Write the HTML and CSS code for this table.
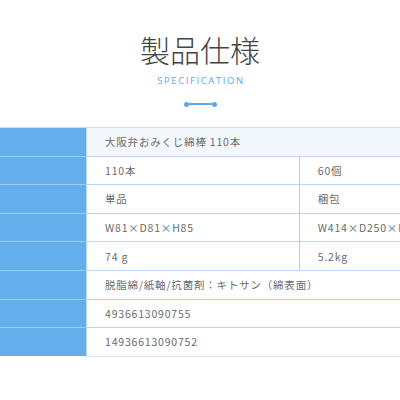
FILE: index.html
```html
<!DOCTYPE html>
<html lang="ja">
<head>
<meta charset="utf-8">
<link rel="stylesheet" href="styles.css">
</head>
<body>
<section class="spec">
  <header class="spec-head">
    <h1 class="spec-title">製品仕様</h1>
    <p class="spec-sub">SPECIFICATION</p>
    <div class="spec-deco"><span class="dot"></span><span class="bar"></span><span class="dot"></span></div>
  </header>
  <div class="table-wrap">
    <table class="spec-table">
      <tr class="first"><th></th><td colspan="2">大阪弁おみくじ綿棒 110本</td></tr>
      <tr><th></th><td class="mid">110本</td><td>60個</td></tr>
      <tr><th></th><td class="mid">単品</td><td>梱包</td></tr>
      <tr><th></th><td class="mid">W81×D81×H85</td><td>W414×D250×H200</td></tr>
      <tr><th></th><td class="mid">74 g</td><td>5.2kg</td></tr>
      <tr><th></th><td colspan="2">脱脂綿/紙軸/抗菌剤：キトサン（綿表面）</td></tr>
      <tr><th></th><td colspan="2">4936613090755</td></tr>
      <tr class="last"><th></th><td colspan="2">14936613090752</td></tr>
    </table>
  </div>
</section>
</body>
</html>
```
FILE: styles.css
```css
html, body {
  margin: 0;
  padding: 0;
  background: #fff;
  overflow: hidden;
}
body {
  font-family: "Noto Sans CJK JP", "Noto Sans", sans-serif;
  color: #666;
}
.spec-head {
  text-align: center;
  padding-top: 34px;
}
.spec-title {
  margin: 0;
  font-size: 30px;
  line-height: 30px;
  font-weight: 300;
  color: #444;
  letter-spacing: 0;
}
.spec-sub {
  margin: 11px 0 0;
  font-family: "Open Sans", "Noto Sans", sans-serif;
  font-size: 9.5px;
  line-height: 12px;
  letter-spacing: 1.6px;
  color: #5fa8e8;
  padding-left: 2px;
}
.spec-deco {
  display: flex;
  justify-content: center;
  align-items: center;
  margin-top: 14px;
  height: 6px;
}
.dot {
  width: 5px;
  height: 5px;
  border-radius: 50%;
  background: #5fa8e8;
}
.bar {
  width: 23px;
  height: 1.5px;
  background: #5fa8e8;
}
.table-wrap {
  margin-top: 20px;
  width: 400px;
  overflow: hidden;
}
.spec-table {
  width: 512px;
  border-collapse: collapse;
  table-layout: fixed;
  box-shadow: 0 1px 1px rgba(100, 170, 230, 0.25);
}
.spec-table th {
  width: 86px;
  background: #63aeeb;
  border-top: 1px solid #9ecdf3;
  border-right: 1px solid #b9dbf6;
  padding: 0;
}
.spec-table td {
  height: 27.6px;
  padding: 0 0 0 18px;
  font-size: 10.5px;
  letter-spacing: 0.8px;
  color: #6b6b6b;
  border-top: 1px solid #b7d8f4;
  white-space: nowrap;
  overflow: hidden;
}
.spec-table td.mid {
  width: 193px;
  border-right: 1px solid #a9d1f3;
}
.spec-table tr.first th,
.spec-table tr.first td {
  border-top: 1px solid #c6e0f6;
}
.spec-table tr.first td {
  background: #f3f8fd;
}
.spec-table tr.last td {
  border-bottom: 1px solid #d3e7f8;
}
```
